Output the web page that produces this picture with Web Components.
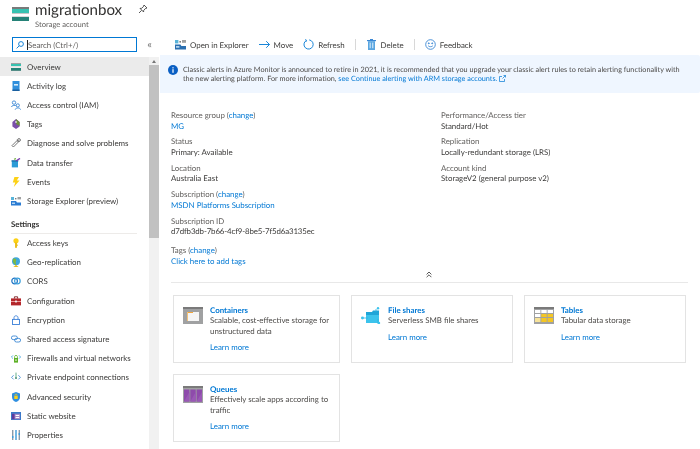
<!DOCTYPE html>
<html><head><meta charset="utf-8">
<style>
html,body{margin:0;height:449px;width:700px;overflow:hidden;background:#fff}
body{font:7.9px Lato,sans-serif;color:#3b3a39;text-rendering:geometricPrecision}
svg{display:block}
</style></head><body>

<template id="t-shell"><style>
:host{display:grid;width:700px;height:449px;grid-template-columns:160px 1fr;grid-template-rows:37px 1fr;overflow:hidden;filter:blur(.3px)}
.head{grid-column:1/3}
.side{display:grid;grid-template-columns:149px 10px;grid-template-rows:20px 1fr;min-height:0}
.search{grid-column:1/3}
.main{min-width:0;min-height:0;overflow:hidden}
</style>
<div class="head"><slot name="head"></slot></div>
<div class="side"><div class="search"><slot name="search"></slot></div><slot name="nav"></slot><slot name="scroll"></slot></div>
<div class="main"><slot></slot></div>
</template>

<template id="t-head"><style>
:host{display:flex;align-items:flex-start;padding:1px 0 0 12px;gap:6px}
.t{font-size:15.1px;line-height:19px;color:#323130;font-weight:400}
.s{font-size:7.6px;line-height:9px;color:#605e5c;margin-top:0}
.ic{margin-top:6px}
.pin{margin:3px 0 0 10px}
</style>
<svg class="ic" width="17" height="14" viewBox="0 0 17 14"><rect width="17" height="14" fill="#a0a1a2"/><rect y="0" width="17" height="2" fill="#7a7a7a"/><rect x="0" y="2" width="17" height="4" fill="#37c2b1"/><rect x="0" y="6.6" width="17" height="3" fill="#fff"/><rect x="0" y="10" width="17" height="4" fill="#258277"/></svg>
<div><div class="t"><slot></slot></div><div class="s"><slot name="sub"></slot></div></div>
<svg class="pin" width="10" height="10" viewBox="0 0 10 10" fill="none" stroke="#444" stroke-width=".9"><path d="M6 1 9 4 7.3 4.6 5.6 6.6 5.6 8 2 4.4 3.4 4.4 5.4 2.7ZM3.6 6.4 1 9"/></svg>
</template>

<template id="t-search"><style>
:host{display:flex;align-items:flex-start;padding:0 0 0 12px}
.box{width:125px;height:15px;box-sizing:border-box;border:1px solid #0078d4;display:flex;align-items:center;gap:2px;padding-left:3px;color:#605e5c;font-size:7.9px}
.cur{width:1px;height:10px;background:#222;margin-left:1px;margin-right:-2px}
.c{margin:2px 0 0 8px;color:#777;font-size:11px;line-height:11px;width:9px;text-align:center}
</style>
<div class="box"><svg width="8" height="8" viewBox="0 0 8 8" fill="none" stroke="#0078d4" stroke-width=".9"><circle cx="5" cy="3" r="2.4"/><path d="M3.2 4.8.6 7.4"/></svg><span class="cur"></span><slot></slot></div>
<span class="c">«</span>
</template>

<template id="t-nav"><style>
:host{display:block;overflow:hidden;min-height:0}
</style><slot></slot></template>

<template id="t-item"><style>
:host{display:flex;align-items:center;height:19.2px;padding-left:11px;gap:6px;font-size:7.95px;color:#3b3a39;white-space:nowrap}
:host([active]){background:#ebebeb}
.i{width:10px;height:10px;flex:none;display:flex;align-items:center;justify-content:center}
::slotted(svg){width:10px;height:10px}
</style><span class="i"><slot name="icon"></slot></span><span><slot></slot></span></template>

<template id="t-group"><style>
:host{display:block;margin:5px 12px 0 11px;padding:3px 0 3px;font-weight:700;font-size:7.9px;line-height:11px;border-bottom:1px solid #edebe9;color:#323130}
</style><slot></slot></template>

<template id="t-scroll"><style>
:host{display:flex;flex-direction:column;background:#f1f1f1;height:392px;width:10px}
.u{height:8px;display:flex;justify-content:center;align-items:center}
.u i{border:solid transparent;border-width:0 2.5px 3px;border-bottom-color:#777}
.th{height:173px;background:#c1c1c1}
</style><div class="u"><i></i></div><div class="th"></div></template>

<template id="t-cmd"><style>
:host{display:flex;align-items:center;height:15px;padding-left:15px;font-size:7.9px;color:#3b3a39;margin-bottom:3px}
</style><slot></slot></template>

<template id="t-cmdi"><style>
:host{display:flex;align-items:center;gap:4px;white-space:nowrap;margin-right:10px}
:host([sep]){padding-right:10px;border-right:1px solid #d8d8d8;height:11px}
::slotted(svg){width:11px;height:11px}
</style><slot name="icon"></slot><slot></slot></template>

<template id="t-banner"><style>
:host{display:flex;gap:5px;height:38px;box-sizing:border-box;padding:10px 8px 0 8px;background:#eff6ff;font-size:7.28px;line-height:9.4px;color:#4c4a48;border-radius:0 2px 2px 0}
svg{flex:none;margin-top:0}
</style>
<svg width="10" height="10" viewBox="0 0 10 10"><circle cx="5" cy="5" r="5" fill="#0a5fc4"/><rect x="4.4" y="4.2" width="1.2" height="3.6" fill="#fff"/><rect x="4.4" y="2.2" width="1.2" height="1.2" fill="#fff"/></svg>
<div><slot></slot></div></template>

<template id="t-grid"><style>
:host{display:grid;grid-template-columns:270px 1fr;padding:17px 0 0 11px;height:169px;box-sizing:border-box}
.c{display:flex;flex-direction:column}
</style><div class="c"><slot name="l"></slot></div><div class="c"><slot name="r"></slot></div></template>

<template id="t-prop"><style>
:host{display:block;font-size:7.9px;line-height:10.5px;margin-bottom:5.45px;color:#3b3a39}
.k{color:#605e5c}
</style><div class="k"><slot name="k"></slot></div><div><slot></slot></div></template>

<template id="t-coll"><style>
:host{display:block;margin:0 12px 0 11px;height:20px;border-bottom:1px solid #e8e8e8;position:relative}
svg{position:absolute;left:255px;top:9px}
</style><svg width="6" height="7" viewBox="0 0 6 7" fill="none" stroke="#444" stroke-width=".9"><path d="M.6 3.4 3 1 5.4 3.4M.6 6.2 3 3.8 5.4 6.2"/></svg></template>

<template id="t-cards"><style>
:host{display:grid;grid-template-columns:167px 162px 162px;gap:11px 11px;padding:12px 0 0 13px;align-items:start}
</style><slot></slot></template>

<template id="t-card"><style>
:host{display:flex;gap:7px;height:68px;box-sizing:border-box;border:1px solid #e3e3e3;padding:9px 8px 0 9px;font-size:7.9px;line-height:10.4px;color:#4c4a48}
.i{flex:none;width:20px;margin-top:2px}
.t{font-weight:700;color:#0078d4}
.m{display:block;margin-top:6px;color:#0078d4}
::slotted(svg){width:20px;height:17px}
</style><div class="i"><slot name="icon"></slot></div><div><div class="t"><slot name="t"></slot></div><div><slot></slot></div><div class="m">Learn more</div></div></template>

<app-shell>
 <az-head slot="head">migrationbox<span slot="sub">Storage account</span></az-head>
 <az-search slot="search">Search (Ctrl+/)</az-search>
 <az-nav slot="nav">
  <az-item active><svg slot="icon" viewBox="0 0 10 10"><rect y="1" width="10" height="8" fill="#a0a1a2"/><rect y="2" width="10" height="2" fill="#37c2b1"/><rect y="4.3" width="10" height="1.5" fill="#fff"/><rect y="6" width="10" height="2.6" fill="#258277"/></svg>Overview</az-item>
  <az-item><svg slot="icon" viewBox="0 0 10 10"><rect x="1.5" y="0" width="7" height="10" fill="#2f8fdc"/><rect x="3" y="3" width="4" height="1.6" fill="#d5ecfb"/><rect x="1.5" y="8.5" width="7" height="1.5" fill="#1a5f9e"/></svg>Activity log</az-item>
  <az-item><svg slot="icon" viewBox="0 0 10 10" fill="none" stroke="#3a87d4" stroke-width=".9"><circle cx="3" cy="2.6" r="1.7"/><path d="M.4 7C.6 5 5 5 5.4 6"/><circle cx="6.8" cy="5.4" r="1.6"/><path d="M4.2 9.6C4.4 7.4 9.2 7.4 9.6 9.6"/></svg>Access control (IAM)</az-item>
  <az-item><svg slot="icon" viewBox="0 0 10 10"><path d="M5 0 8.6 3V7.5L5 10 1.4 7.5V3Z" fill="#7a4fa8"/><path d="M5 0 8.6 3V7L5 5Z" fill="#6d8f3c"/><circle cx="5" cy="3" r=".9" fill="#ddd"/></svg>Tags</az-item>
  <az-item><svg slot="icon" viewBox="0 0 10 10" fill="none" stroke="#666" stroke-width=".9"><path d="M6.2 1.8 8.2 3.8M6 2.6 1 7.6 2.4 9 7.4 4Z"/><circle cx="8" cy="2" r="1.4"/></svg>Diagnose and solve problems</az-item>
  <az-item><svg slot="icon" viewBox="0 0 10 10"><path d="M.8 3H7V9.4H.8Z" fill="#2b9bd6"/><rect x=".5" y="2.2" width="6.8" height="1.4" fill="#1c6fa8"/><path d="M5 3 9 .4" stroke="#7a3fb0" stroke-width="1.4"/><path d="M3 1.2 5 .6" stroke="#6aa83c" stroke-width="1.2"/></svg>Data transfer</az-item>
  <az-item><svg slot="icon" viewBox="0 0 10 10"><path d="M3.4 0H8L5.8 3.6H8.6L2.8 10 4.2 5.4H1.8Z" fill="#fcd116"/></svg>Events</az-item>
  <az-item><svg slot="icon" viewBox="0 0 10 10"><rect x="0" y="1" width="3" height="3" fill="#59b4d9"/><rect x="4" y="2" width="1.4" height="1.4" fill="#7a7a7a"/><rect x="6.5" y="1" width="3.5" height="2.4" fill="#a0a1a2"/><path d="M0 5 5 5 6 6.4H10V9.6H0Z" fill="#2b7cd3"/><rect x="1" y="6.6" width="3" height="1.2" fill="#d5ecfb"/></svg>Storage Explorer (preview)</az-item>
  <az-group>Settings</az-group>
  <az-item><svg slot="icon" viewBox="0 0 10 10"><circle cx="5" cy="2.8" r="2.6" fill="#fcd116"/><rect x="4.1" y="4.5" width="1.8" height="5.3" fill="#e8b90c"/><rect x="5.5" y="6.6" width="1.3" height="1.2" fill="#e8b90c"/></svg>Access keys</az-item>
  <az-item><svg slot="icon" viewBox="0 0 10 10"><circle cx="5" cy="4.2" r="4" fill="#3fa7dc"/><path d="M2 2C4 1 6 2 5 4S6 7 4.6 8C3 7 1.4 5 2 2Z" fill="#7fb93d"/><rect x="4.3" y="8" width="1.4" height="2" fill="#e4b818"/><rect x="2.8" y="9.2" width="4.4" height=".8" fill="#e4b818"/></svg>Geo-replication</az-item>
  <az-item><svg slot="icon" viewBox="0 0 10 10" fill="none" stroke="#2073c4" stroke-width="1.2"><circle cx="3.6" cy="5" r="2.8"/><circle cx="6.4" cy="5" r="2.8" stroke="#3aa0dc"/></svg>CORS</az-item>
  <az-item><svg slot="icon" viewBox="0 0 10 10"><path d="M3.4 2.6V.8H6.6V2.6" fill="none" stroke="#7a1f22" stroke-width=".9"/><rect y="2.4" width="10" height="7" fill="#b3262b"/><rect y="5" width="10" height="1" fill="#ef9a9a"/><rect x="4" y="4.6" width="2" height="1.8" fill="#eee"/></svg>Configuration</az-item>
  <az-item><svg slot="icon" viewBox="0 0 10 10" fill="none" stroke="#3a7fd8" stroke-width=".9"><rect x="1.5" y="4.4" width="7" height="5.1"/><path d="M3 4.4V2.6C3 .2 7 .2 7 2.6V4.4"/></svg>Encryption</az-item>
  <az-item><svg slot="icon" viewBox="0 0 10 10" fill="none" stroke="#3a87d4" stroke-width=".9"><rect x=".4" y="2" width="6" height="3.6" rx="1.8"/><rect x="3.6" y="4.4" width="6" height="3.6" rx="1.8"/></svg>Shared access signature</az-item>
  <az-item><svg slot="icon" viewBox="0 0 10 10"><rect x="3" y="5" width="4" height="4.6" fill="#5cb024"/><rect x="4.4" y="6.4" width="1.2" height="1.4" fill="#fff"/><path d="M3.6 5V3.6C3.6 2 6.4 2 6.4 3.6V5" fill="none" stroke="#5cb024" stroke-width=".8"/><path d="M2 2.4.4 4 2 5.6M8 2.4 9.6 4 8 5.6" fill="none" stroke="#3aa0dc" stroke-width=".8"/></svg>Firewalls and virtual networks</az-item>
  <az-item><svg slot="icon" viewBox="0 0 10 10" fill="none" stroke="#3a87d4" stroke-width=".8"><path d="M2.6 3.2.6 5.4 2.6 7.4M7.4 3.2 9.4 5.4 7.4 7.4"/><path d="M5 .6V5" stroke="#3f9a6d"/><circle cx="5" cy="6" r="1" fill="#3f8a6d" stroke="none"/></svg>Private endpoint connections</az-item>
  <az-item><svg slot="icon" viewBox="0 0 10 10"><path d="M5 0 9 1.4V5C9 8 6.6 9.4 5 10 3.4 9.4 1 8 1 5V1.4Z" fill="#2f8fe0"/><rect x="3.3" y="4" width="3.4" height="3" fill="#fcd116"/><path d="M4 4V3C4 1.8 6 1.8 6 3V4" fill="none" stroke="#fcd116" stroke-width=".7"/></svg>Advanced security</az-item>
  <az-item><svg slot="icon" viewBox="0 0 10 10"><rect y="1" width="10" height="8" fill="#3b78c9"/><rect x="1" y="2.8" width="8" height="5.4" fill="#a88cc8"/><rect x="1" y="2.8" width="2.6" height="5.4" fill="#5d3a9b"/><rect x="4.6" y="4" width="3.6" height="1" fill="#fff"/><rect x="4.6" y="6" width="3.6" height="1" fill="#fff"/></svg>Static website</az-item>
  <az-item><svg slot="icon" viewBox="0 0 10 10"><rect x="1" y="0" width="1.4" height="10" fill="#8a9aa8"/><rect x="4.3" y="0" width="1.4" height="10" fill="#3a9bd8"/><rect x="7.6" y="0" width="1.4" height="10" fill="#8a9aa8"/><rect x="1" y="6" width="1.4" height="2" fill="#3a9bd8"/><rect x="7.6" y="3" width="1.4" height="2" fill="#3a9bd8"/></svg>Properties</az-item>
 </az-nav>
 <az-scroll slot="scroll"></az-scroll>

 <az-cmd>
  <az-cmdi><svg slot="icon" viewBox="0 0 11 11"><rect x="0" y="1" width="3.4" height="3.4" fill="#59b4d9"/><rect x="4.4" y="2" width="1.6" height="1.6" fill="#7a7a7a"/><rect x="7" y="1" width="4" height="2.8" fill="#a0a1a2"/><path d="M0 5.4H5.4L6.4 7H11V10.5H0Z" fill="#2b6fb0"/><rect x="1" y="7.2" width="3.4" height="1.4" fill="#d5ecfb"/></svg>Open in Explorer</az-cmdi>
  <az-cmdi><svg slot="icon" viewBox="0 0 11 11" fill="none" stroke="#0078d4" stroke-width=".9"><path d="M0 5.5H10.4M7.2 2.2 10.5 5.5 7.2 8.8"/></svg>Move</az-cmdi>
  <az-cmdi sep><svg slot="icon" viewBox="0 0 11 11" fill="none" stroke="#0078d4" stroke-width=".9"><path d="M3.4 1.4A4.6 4.6 0 1 0 6.2 .9"/><path d="M2.2 .4 3.6 1.4 2.8 3" stroke-width=".8"/></svg>Refresh</az-cmdi>
  <az-cmdi sep><svg slot="icon" viewBox="0 0 11 11"><rect x="1" y="1" width="9" height="1.2" fill="#3a87d4"/><rect x="4" y="0" width="3" height="1.2" fill="#3a87d4"/><path d="M2 2.2H9V11H2Z" fill="#59a5e0"/><rect x="3.6" y="3.6" width="1.1" height="5.6" fill="#d5ecfb"/><rect x="6.2" y="3.6" width="1.1" height="5.6" fill="#d5ecfb"/></svg>Delete</az-cmdi>
  <az-cmdi><svg slot="icon" viewBox="0 0 11 11" fill="none" stroke="#3a87d4" stroke-width=".9"><circle cx="5.5" cy="5.5" r="4.8"/><circle cx="3.8" cy="4.3" r=".5" fill="#3a87d4"/><circle cx="7.2" cy="4.3" r=".5" fill="#3a87d4"/><path d="M3.2 6.8C4.2 8 6.8 8 7.8 6.8"/></svg>Feedback</az-cmdi>
 </az-cmd>
 <az-banner>Classic alerts in Azure Monitor is announced to retire in 2021, it is recommended that you upgrade your classic alert rules to retain alerting functionality with<br>the new alerting platform. For more information, <span style="color:#0078d4">see Continue alerting with ARM storage accounts. <svg style="display:inline-block;vertical-align:-1px" width="7" height="7" viewBox="0 0 7 7" fill="none" stroke="#0078d4" stroke-width=".7"><path d="M3 1.5H.5V6.5H5.5V4M3.5 3.5 6.5.5M4.5.5H6.5V2.5"/></svg></span></az-banner>
 <az-grid>
  <az-prop slot="l"><span slot="k">Resource group (<a style="color:#0078d4">change</a>)</span><a style="color:#0078d4">MG</a></az-prop>
  <az-prop slot="l"><span slot="k">Status</span>Primary: Available</az-prop>
  <az-prop slot="l"><span slot="k">Location</span>Australia East</az-prop>
  <az-prop slot="l"><span slot="k">Subscription (<a style="color:#0078d4">change</a>)</span><a style="color:#0078d4">MSDN Platforms Subscription</a></az-prop>
  <az-prop slot="l" style="margin-bottom:8.5px"><span slot="k">Subscription ID</span><span style="letter-spacing:-.14px">d7dfb3db-7b66-4cf9-8be5-7f5d6a3135ec</span></az-prop>
  <az-prop slot="l"><span slot="k">Tags (<a style="color:#0078d4">change</a>)</span><a style="color:#0078d4">Click here to add tags</a></az-prop>
  <az-prop slot="r"><span slot="k">Performance/Access tier</span>Standard/Hot</az-prop>
  <az-prop slot="r"><span slot="k">Replication</span>Locally-redundant storage (LRS)</az-prop>
  <az-prop slot="r"><span slot="k">Account kind</span>StorageV2 (general purpose v2)</az-prop>
 </az-grid>
 <az-coll></az-coll>
 <az-cards>
  <az-card><svg slot="icon" viewBox="0 0 20 17"><rect width="20" height="17" fill="#a0a1a2"/><rect width="20" height="2" fill="#7a7a7a"/><rect x="4" y="5" width="12" height="9" fill="#f5f5f5"/><path d="M4 5H10V6H4Z" fill="#f2a63b"/><rect x="4" y="5" width="1" height="9" fill="#f2c078"/></svg><span slot="t">Containers</span>Scalable, cost-effective storage for unstructured data</az-card>
  <az-card><svg slot="icon" viewBox="0 0 20 17"><path d="M5 5H11L12 3.5H18V16H5Z" fill="#1fa5d8"/><path d="M5 8H18V16H5Z" fill="#3cc3ec"/><path d="M0 11H7M15 2V5M17 12V17" stroke="#2bb4e4" stroke-width=".8"/><circle cx="1.5" cy="11" r="1.4" fill="#3cc3ec"/><circle cx="17" cy="1.2" r="1.2" fill="#3cc3ec"/><circle cx="18" cy="16" r="1.2" fill="#3cc3ec"/></svg><span slot="t">File shares</span>Serverless SMB file shares</az-card>
  <az-card><svg slot="icon" viewBox="0 0 20 17"><rect width="20" height="17" fill="#a0a1a2"/><rect width="20" height="2" fill="#7a7a7a"/><g fill="#fff"><rect x="1" y="3" width="5.4" height="3"/><rect x="7.3" y="3" width="5.4" height="3"/><rect x="13.6" y="3" width="5.4" height="3"/><rect x="1" y="7" width="5.4" height="3"/></g><g fill="#f4c623"><rect x="7.3" y="7" width="5.4" height="3"/><rect x="13.6" y="7" width="5.4" height="3"/><rect x="7.3" y="11" width="5.4" height="4"/><rect x="13.6" y="11" width="5.4" height="4"/></g><rect x="1" y="11" width="5.4" height="4" fill="#f7e39a"/></svg><span slot="t">Tables</span>Tabular data storage</az-card>
  <az-card><svg slot="icon" viewBox="0 0 20 17"><rect width="20" height="17" fill="#a0a1a2"/><rect width="20" height="2" fill="#7a7a7a"/><rect x="1" y="3.5" width="5.4" height="12" fill="#8e4bab"/><rect x="7.3" y="3.5" width="5.4" height="12" fill="#8e4bab"/><rect x="13.6" y="3.5" width="5.4" height="12" fill="#8e4bab"/><path d="M1 15.5 6.4 6V15.5ZM7.3 15.5 12.7 6V15.5ZM13.6 15.5 19 6V15.5Z" fill="#9a58b6"/></svg><span slot="t">Queues</span>Effectively scale apps according to traffic</az-card>
 </az-cards>
</app-shell>

<script>
const defs={'app-shell':'t-shell','az-head':'t-head','az-search':'t-search','az-nav':'t-nav','az-item':'t-item','az-group':'t-group','az-scroll':'t-scroll','az-cmd':'t-cmd','az-cmdi':'t-cmdi','az-banner':'t-banner','az-grid':'t-grid','az-prop':'t-prop','az-coll':'t-coll','az-cards':'t-cards','az-card':'t-card'};
for(const [n,id] of Object.entries(defs)){
 customElements.define(n,class extends HTMLElement{
  constructor(){super();this.attachShadow({mode:'open'}).appendChild(document.getElementById(id).content.cloneNode(true));}
 });
}
</script>
</body></html>
